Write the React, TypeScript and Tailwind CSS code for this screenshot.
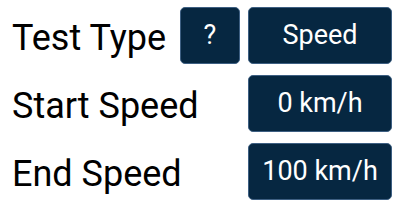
const btn =
  'flex h-[57px] items-center justify-center rounded-[5px] border border-[#3d5f82] bg-[#062741] text-white text-[27px]';

function Row({ label, children }: { label: string; children: React.ReactNode }) {
  return (
    <div className="flex h-[57px] items-center">
      <span className="flex-1 pl-[12px] pt-[4px] text-[36px] text-black">{label}</span>
      {children}
    </div>
  );
}

export default function App() {
  return (
    <div
      className="w-[400px] h-[208px] bg-white pt-[7px] pr-[8px] flex flex-col gap-[11px]"
      style={{ fontFamily: 'Roboto, "Liberation Sans", sans-serif' }}
    >
      <Row label="Test Type">
        <button className={`${btn} w-[60px] mr-[8px]`}>?</button>
        <button className={`${btn} w-[144px]`}>Speed</button>
      </Row>
      <Row label="Start Speed">
        <div className={`${btn} w-[144px]`}>0 km/h</div>
      </Row>
      <Row label="End Speed">
        <div className={`${btn} w-[144px]`}>100 km/h</div>
      </Row>
    </div>
  );
}
